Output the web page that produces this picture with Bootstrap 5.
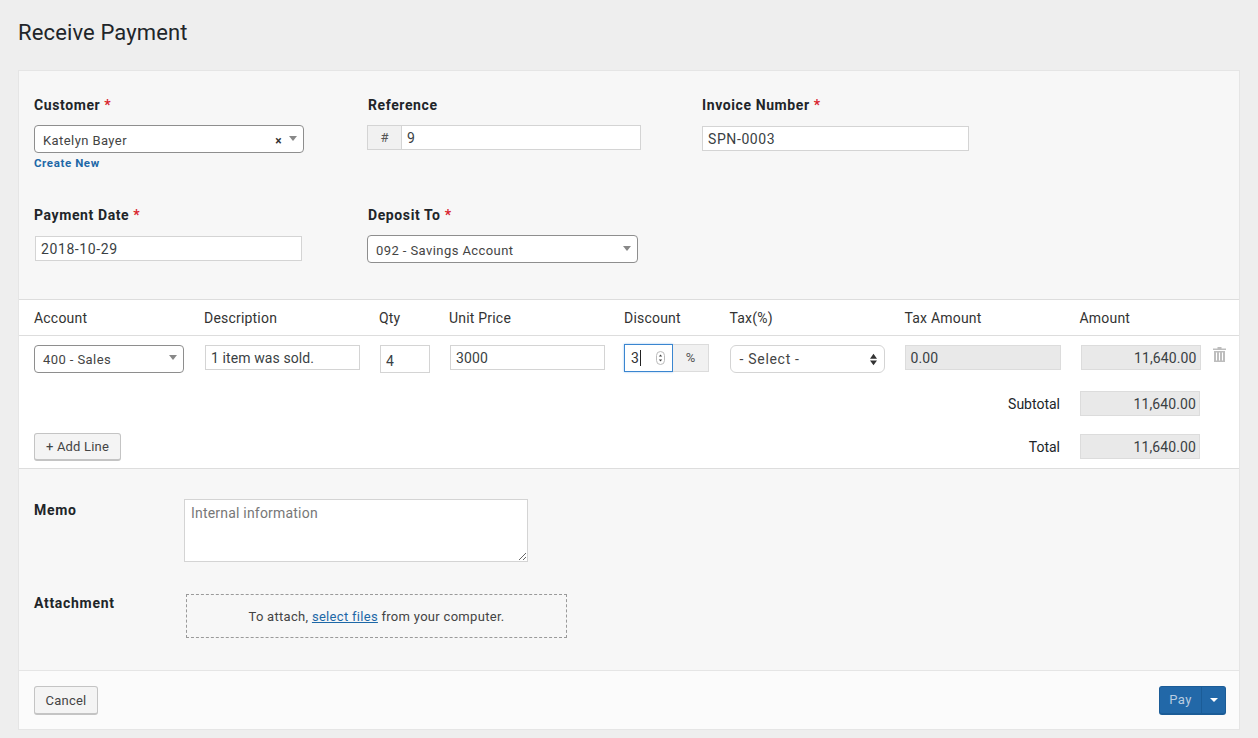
<!doctype html>
<html lang="en"><head><meta charset="utf-8"><title>Receive Payment</title>
<link href="https://cdn.jsdelivr.net/npm/bootstrap@5.3.0/dist/css/bootstrap.min.css" rel="stylesheet">
<style>
html,body{height:738px;overflow:hidden}
body{background:#eee;font-family:Roboto,"Liberation Sans",sans-serif;font-size:14px;color:#212529;padding:0 18px}
.pg-title{font-size:22px;font-weight:400;line-height:26px;margin:0;padding:20px 0 24px;color:#212529;letter-spacing:.13px}
.pay-card{width:1222px;height:660px;border:1px solid #e5e5e5;background:#f7f7f7;display:flex;flex-direction:column}
.top-form{height:228px;flex:none;padding:0 15px;display:grid;grid-template-columns:334px 334px 334px;grid-template-rows:110px 118px}
.fld{padding-top:26px}
.fld-label{display:block;font-weight:700;font-size:14px;line-height:17px;margin:0 0 11px;letter-spacing:.6px}
.req{color:#d9232d}
.pick{height:28px;border:1px solid #8e8e8e;border-radius:4px;background:#fff;display:flex;align-items:center;padding:3px 5px 0 8px;font-size:13px;color:#444;letter-spacing:.42px;position:relative}
.pick .grow{flex:1 1 auto;line-height:20px}
.tri{width:0;height:0;border-left:4.5px solid transparent;border-right:4.5px solid transparent;border-top:5px solid #888;margin-top:-5px;margin-right:1px}
.clr{font-size:12px;color:#333;font-weight:700;margin-right:7px;line-height:12px;margin-top:1px}
.fc{display:block;height:25px;border:1px solid #d4d4d4;border-radius:0;background:#fff;padding:0 5px;font-size:14px;line-height:23px;color:#3a3f44;letter-spacing:.1px;box-shadow:none;width:100%}
.fc.ro{background:#e9e9e9;border-color:#dcdcdc;line-height:25px}
.fc.end{text-align:right;padding-right:3px}
.fc.wide-txt{letter-spacing:.6px}
.w-cust{width:270px}.w-dep{width:271px;margin-left:-1px}
.w-date{width:267px;margin-left:1px;margin-top:12px}
.w-inv{width:267px;margin-top:12px}
.create{display:block;font-size:11.5px;font-weight:700;line-height:13px;margin-top:4px;color:#1d68a7;text-decoration:none;letter-spacing:.6px}
.ref-grp{display:flex;width:274px;margin-left:-1px}
.ref-hash{flex:none;width:34px;height:25px;border:1px solid #d4d4d4;border-right:0;background:#f1f1f1;text-align:center;line-height:23px;color:#555;font-size:13px}
.items{height:170px;flex:none;background:#fff;border-top:1px solid #ddd;border-bottom:1px solid #ddd;box-shadow:0 1px 1px #eee;display:flex;flex-direction:column;padding:0}
.i-grid{display:grid;grid-template-columns:170px 175px 70px 175px 105.5px 175px 175px 1fr;padding-left:15px}
.i-head{height:36px;flex:none;border-bottom:1px solid #ddd;line-height:37px;color:#333;letter-spacing:.2px}
.i-row{padding-top:9px;height:55px;flex:none}
.w-acc{width:150px;padding-top:1px}
.w-desc{width:155px;margin-left:1px}
.w-qty{width:50px;height:28px;margin-left:1px;padding-top:3px}
.w-up{width:155px;margin-left:1px}
.disc{display:flex;width:85px;margin-top:-1px}
.disc-in{width:49px;height:28px;border:1.5px solid #3a86d0;background:#fff;display:flex;align-items:center;padding:0 6px;font-size:14px;box-shadow:0 0 2px #9cc4ee;color:#333}
.cursor{width:1px;height:16px;background:#222;margin-left:1px}
.disc-pc{width:36px;height:28px;border:1px solid #dcdcdc;border-left:0;background:#f1f1f1;text-align:center;line-height:26px;font-size:13px;color:#555}
.spin{margin-left:auto;margin-right:1px}
.tax{width:155px;border-color:#d4d4d4;border-radius:6px;padding:0 7px 0 9px;font-size:14px;letter-spacing:.7px}
.w-tam{width:156px}
.w-am{width:120px;margin-left:1px}
.am-cell{display:flex;gap:12px}
.trash{margin-top:2px}
.tot-wrap{flex:1 1 auto;position:relative;padding:0 15px;display:flex;justify-content:space-between}
.add-btn{align-self:flex-end;margin-bottom:7px;width:87px;height:28px;padding:0;font-size:13px;line-height:24px;background:#f4f4f4;border:1px solid #c4c4c4;border-bottom-width:2px;border-radius:3px;color:#444;letter-spacing:.2px}
.tots{width:434px;margin-right:24px}
.tot-row{display:flex;align-items:center;justify-content:flex-end;gap:20px;height:25px}
.tot-row+.tot-row{margin-top:18px}
.tot-row .fc{width:120px;flex:none}
.tot-label{padding-top:2px}
.lower{height:201px;flex:none;padding:30px 15px 0;background:#f7f7f7}
.low-row{display:flex}
.low-label{width:150px;font-weight:700;line-height:17px;padding-top:3px;letter-spacing:.7px}
.memo{width:344px;height:63px;border:1px solid #d4d4d4;background:#fff;padding:3px 6px;font-size:14px;line-height:20px;letter-spacing:.2px;border-radius:0;resize:vertical;display:block;color:#333}
.memo::placeholder{color:#777;opacity:1}
.drop{width:381px;height:44px;margin-left:2px;border:1px dashed #9a9a9a;text-align:center;line-height:44px;font-size:13px;color:#444;letter-spacing:.3px}
.drop a{color:#1d68a7}
.low-row.second{margin-top:32px}
.low-row.second .low-label{padding-top:1px}
.foot{height:59px;flex:none;background:#fbfbfb;border-top:1px solid #e5e5e5;display:flex;justify-content:space-between;align-items:flex-start;padding:15px 13px 0 15px}
.cancel{width:64px;height:29px;padding:0;font-size:13px;line-height:25px;background:#f4f4f4;border:1px solid #c4c4c4;border-bottom-width:2px;border-radius:3px;color:#444;letter-spacing:.2px}
.pay-grp{display:flex;height:29px;background:#2268a8;border:1px solid #1b5c97;border-bottom-width:2px;border-radius:3px;color:#b9cde0;font-size:13px}
.pay-main{width:42px;text-align:center;line-height:25px;border-right:1px solid #1b5c97;letter-spacing:.4px}
.pay-more{width:23px;display:flex;align-items:center;justify-content:center}
.pay-tri{width:0;height:0;border-left:4px solid transparent;border-right:4px solid transparent;border-top:4px solid #fff}
</style></head>
<body>
<h1 class="pg-title">Receive Payment</h1>
<div class="pay-card">
  <div class="top-form">
    <div class="fld">
      <label class="fld-label">Customer <span class="req">*</span></label>
      <div class="pick w-cust"><span class="grow">Katelyn Bayer</span><span class="clr">×</span><span class="tri"></span></div>
      <a class="create" href="#">Create New</a>
    </div>
    <div class="fld">
      <label class="fld-label">Reference</label>
      <div class="ref-grp"><span class="ref-hash">#</span><input class="fc" value="9"></div>
    </div>
    <div class="fld">
      <label class="fld-label">Invoice Number <span class="req">*</span></label>
      <input class="fc w-inv wide-txt" value="SPN-0003">
    </div>
    <div class="fld">
      <label class="fld-label">Payment Date <span class="req">*</span></label>
      <input class="fc w-date wide-txt" value="2018-10-29">
    </div>
    <div class="fld">
      <label class="fld-label">Deposit To <span class="req">*</span></label>
      <div class="pick w-dep"><span class="grow">092 - Savings Account</span><span class="tri"></span></div>
    </div>
  </div>
  <div class="items">
    <div class="i-grid i-head">
      <div>Account</div><div>Description</div><div>Qty</div><div>Unit Price</div><div>Discount</div><div>Tax(%)</div><div>Tax Amount</div><div>Amount</div>
    </div>
    <div class="i-grid i-row">
      <div><div class="pick w-acc"><span class="grow">400 - Sales</span><span class="tri"></span></div></div>
      <div><input class="fc w-desc" value="1 item was sold."></div>
      <div><input class="fc w-qty" value="4"></div>
      <div><input class="fc w-up" value="3000"></div>
      <div><div class="disc">
        <div class="disc-in">3<span class="cursor"></span>
          <svg class="spin" width="9" height="14" viewBox="0 0 9 14"><rect x=".5" y=".5" width="8" height="13" rx="4" fill="#fff" stroke="#bbb"/><path d="M2.800 5.500 4.500 3.500 6.200 5.500ZM2.800 8.500 4.500 10.500 6.200 8.500Z" fill="#444"/></svg>
        </div><div class="disc-pc">%</div>
      </div></div>
      <div><div class="pick tax"><span class="grow">- Select -</span>
        <svg width="7" height="13" viewBox="0 0 8 13"><path d="M0 5.500 4 0 8 5.500ZM0 7.500 4 13 8 7.500Z" fill="#333"/></svg></div></div>
      <div><div class="fc ro w-tam">0.00</div></div>
      <div class="am-cell"><div class="fc ro end w-am">11,640.00</div>
        <svg class="trash" width="13" height="15" viewBox="0 0 13 15"><path d="M4.500 1.500V0h4v1.500H13V3H0V1.500ZM1 4h11v11H1Z" fill="#bdbdbd"/><path d="M3.500 5.500v8M6.500 5.500v8M9.500 5.500v8" stroke="#fff" stroke-width="1"/></svg></div>
    </div>
    <div class="tot-wrap">
      <button class="btn add-btn" type="button">+ Add Line</button>
      <div class="tots">
        <div class="tot-row"><span class="tot-label">Subtotal</span><div class="fc ro end">11,640.00</div></div>
        <div class="tot-row"><span class="tot-label">Total</span><div class="fc ro end">11,640.00</div></div>
      </div>
    </div>
  </div>
  <div class="lower">
    <div class="low-row"><div class="low-label">Memo</div><textarea class="memo" placeholder="Internal information"></textarea></div>
    <div class="low-row second"><div class="low-label">Attachment</div><div class="drop">To attach, <a href="#">select files</a> from your computer.</div></div>
  </div>
  <div class="foot">
    <button class="btn cancel" type="button">Cancel</button>
    <div class="pay-grp"><span class="pay-main">Pay</span><span class="pay-more"><span class="pay-tri"></span></span></div>
  </div>
</div>
<script src="https://cdn.jsdelivr.net/npm/bootstrap@5.3.0/dist/js/bootstrap.bundle.min.js"></script>
</body></html>
